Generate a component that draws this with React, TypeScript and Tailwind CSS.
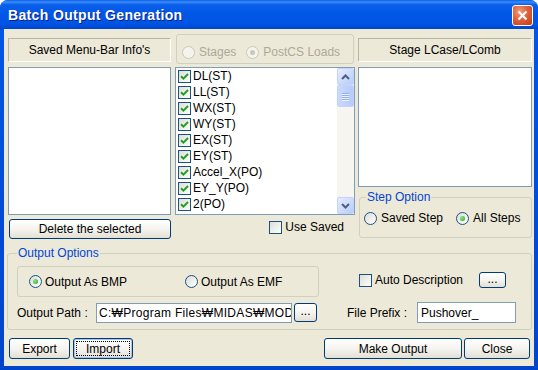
import React from "react";

const loads = ["DL(ST)", "LL(ST)", "WX(ST)", "WY(ST)", "EX(ST)", "EY(ST)", "Accel_X(PO)", "EY_Y(PO)", "2(PO)"];

function Check({ checked = false }: { checked?: boolean }) {
  return (
    <span className="w-[13px] h-[13px] shrink-0 border border-[#1C5180] bg-linear-to-br from-[#DCDCD7] to-white flex items-center justify-center">
      {checked && (
        <svg width="9" height="9" viewBox="0 0 9 9">
          <path d="M1 4.2 L3.4 6.6 L8 2" stroke="#21A121" strokeWidth="2" fill="none" />
        </svg>
      )}
    </span>
  );
}

function Radio({ checked = false, disabled = false }: { checked?: boolean; disabled?: boolean }) {
  return (
    <span
      className={`w-[13px] h-[13px] shrink-0 rounded-full border flex items-center justify-center ${
        disabled ? "border-[#CAC8BB] bg-[#F4F3EE]" : "border-[#1C5180] bg-linear-to-br from-[#DCDCD7] to-white"
      }`}
    >
      {checked && (
        <span
          className={`w-[5px] h-[5px] rounded-full ${
            disabled ? "bg-[#CAC8BB]" : "bg-[radial-gradient(circle_at_35%_35%,#8CE88C,#21A121)]"
          }`}
        />
      )}
    </span>
  );
}

function Btn({ children, className = "", focused = false }: { children: React.ReactNode; className?: string; focused?: boolean }) {
  return (
    <button
      className={`flex items-center justify-center rounded-[3px] border border-[#003C74] bg-linear-to-b from-white via-[#F5F4EF] to-[#E2DFD5] text-[12px] text-black leading-none ${
        focused ? "shadow-[inset_0_0_0_1px_#A9C2EC]" : ""
      } ${className}`}
    >
      {focused ? (
        <span className="self-stretch flex-1 m-[2px] border border-dotted border-black flex items-center justify-center">
          {children}
        </span>
      ) : (
        children
      )}
    </button>
  );
}

function Chevron({ up }: { up?: boolean }) {
  return (
    <svg width="9" height="6" viewBox="0 0 9 6">
      <path d={up ? "M1 5 L4.5 1.5 L8 5" : "M1 1 L4.5 4.5 L8 1"} stroke="#4D6185" strokeWidth="2" fill="none" />
    </svg>
  );
}

function ScrollBtn({ up }: { up?: boolean }) {
  return (
    <div className="h-[17px] shrink-0 rounded-[2px] border border-[#C3D3FD] bg-linear-to-br from-[#E5EDFF] to-[#B9CCF8] flex items-center justify-center">
      <Chevron up={up} />
    </div>
  );
}

export default function App() {
  return (
    <div className="w-[538px] h-[370px] flex flex-col rounded-t-[8px] bg-linear-to-b from-[#0058E8] to-[#0044CC] font-['Liberation_Sans',Arial,sans-serif] text-[12px] text-black">
      {/* title bar */}
      <div className="h-[29px] shrink-0 flex items-center justify-between pl-[8px] pr-[5px] rounded-t-[8px] bg-[linear-gradient(180deg,#0A5FEE_0%,#3B8CF7_7%,#0B5FEA_16%,#0056E6_50%,#0054E3_82%,#0046D0_100%)]">
        <span className="mt-[1px] text-white font-bold text-[14px] tracking-[0.35px] [text-shadow:1px_1px_0_#0A1E8C]">
          Batch Output Generation
        </span>
        <span className="mt-[1px] w-[21px] h-[21px] rounded-[3px] border border-white bg-[radial-gradient(circle_at_35%_30%,#F29A7A,#E0603D_45%,#C23A18)] flex items-center justify-center">
          <svg width="11" height="11" viewBox="0 0 11 11">
            <path d="M1.5 1.5 L9.5 9.5 M9.5 1.5 L1.5 9.5" stroke="white" strokeWidth="2.2" />
          </svg>
        </span>
      </div>

      {/* client */}
      <div className="flex-1 mx-[4px] mb-[4px] bg-[#ECE9D8] flex flex-col">
        <div className="flex items-start pl-[4px]">
          {/* saved menu-bar infos */}
          <div className="w-[163px] flex flex-col">
            <div className="mt-[9px] h-[24px] border border-[#B9B6A6] border-b-white border-r-white flex items-center justify-center">
              Saved Menu-Bar Info's
            </div>
            <div className="mt-[5px] h-[148px] border border-[#7F9DB9] bg-white" />
            <Btn className="mt-[4px] ml-[1px] w-[162px] h-[20px]">Delete the selected</Btn>
          </div>

          {/* loads */}
          <div className="ml-[4px] w-[180px] flex flex-col">
            <div className="mt-[5px] mx-[1px] h-[30px] rounded-[3px] border border-[#D0D0BF] flex items-center pt-[6px] pl-[5px] text-[#ACA899]">
              <Radio disabled />
              <span className="ml-[4px]">Stages</span>
              <span className="ml-[10px]"><Radio disabled checked /></span>
              <span className="ml-[4px]">PostCS Loads</span>
            </div>
            <div className="mt-[3px] h-[148px] border border-[#7F9DB9] bg-white flex">
              <div className="flex-1 flex flex-col">
                {loads.map((l) => (
                  <div key={l} className="h-[16px] flex items-center pl-[2px] gap-[2px]">
                    <Check checked />
                    <span>{l}</span>
                  </div>
                ))}
              </div>
              <div className="w-[17px] flex flex-col bg-[#F6F5F0]">
                <ScrollBtn up />
                <div className="h-[22px] rounded-[2px] border border-[#C3D3FD] bg-linear-to-r from-[#C9D8FC] to-[#B7CBF8] flex flex-col items-center justify-center gap-[1px]">
                  {[0, 1, 2, 3].map((i) => (
                    <span key={i} className="w-[7px] h-[1px] bg-[#8EAEF5] shadow-[0_1px_0_#EEF4FF]" />
                  ))}
                </div>
                <div className="flex-1" />
                <ScrollBtn />
              </div>
            </div>
            <div className="h-[24px] flex items-center justify-end pr-[11px] gap-[3px]">
              <Check />
              <span>Use Saved</span>
            </div>
          </div>

          {/* stage lcase */}
          <div className="ml-[3px] w-[174px] flex flex-col">
            <div className="mt-[9px] h-[24px] border border-[#B9B6A6] border-b-white border-r-white flex items-center justify-center">
              Stage LCase/LComb
            </div>
            <div className="mt-[5px] h-[120px] border border-[#7F9DB9] bg-white" />
            <fieldset className="mt-[3px] ml-[1px] rounded-[3px] border border-[#D0D0BF] pb-[11px]">
              <legend className="ml-[6px] px-[1px] leading-[14px] text-[#0046D5]">Step Option</legend>
              <div className="mt-[6px] h-[16px] flex items-center pl-[4px]">
                <Radio />
                <span className="ml-[4px]">Saved Step</span>
                <span className="ml-[13px]"><Radio checked /></span>
                <span className="ml-[4px]">All Steps</span>
              </div>
            </fieldset>
          </div>
        </div>

        {/* output options */}
        <fieldset className="mt-[7px] ml-[3px] w-[525px] rounded-[3px] border border-[#D0D0BF] pb-[6px]">
          <legend className="ml-[9px] px-[1px] leading-[14px] text-[#0046D5]">Output Options</legend>
          <div className="mt-[6px] flex items-center">
            <div className="ml-[9px] w-[302px] h-[31px] rounded-[3px] border border-[#D0D0BF] flex items-center pl-[11px]">
              <div className="w-[156px] flex items-center">
                <Radio checked />
                <span className="ml-[3px]">Output As BMP</span>
              </div>
              <Radio />
              <span className="ml-[3px]">Output As EMF</span>
            </div>
            <div className="ml-[40px] -mt-[3px] flex items-center">
              <Check />
              <span className="ml-[3px]">Auto Description</span>
            </div>
            <Btn className="ml-[16px] -mt-[3px] w-[27px] h-[16px] pb-[3px]">...</Btn>
          </div>
          <div className="mt-[5px] h-[21px] flex items-center">
            <span className="ml-[9px] w-[79px]">Output Path :</span>
            <div className="w-[196px] h-[20px] border border-[#7F9DB9] bg-white pl-[2px] flex items-center overflow-hidden whitespace-nowrap tracking-[0.3px]">
              C:₩Program Files₩MIDAS₩MOD
            </div>
            <Btn className="ml-[2px] w-[23px] h-[19px] pb-[3px]">...</Btn>
            <span className="ml-[30px] w-[70px]">File Prefix :</span>
            <div className="w-[99px] h-[21px] border border-[#7F9DB9] bg-white pl-[3px] flex items-center">
              Pushover_
            </div>
          </div>
        </fieldset>

        {/* buttons */}
        <div className="mt-[8px] flex items-center">
          <Btn className="ml-[5px] w-[61px] h-[21px]">Export</Btn>
          <Btn focused className="ml-[3px] w-[60px] h-[21px]">Import</Btn>
          <Btn className="ml-[191px] w-[138px] h-[21px]">Make Output</Btn>
          <Btn className="ml-[2px] w-[66px] h-[21px]">Close</Btn>
        </div>
      </div>
    </div>
  );
}
